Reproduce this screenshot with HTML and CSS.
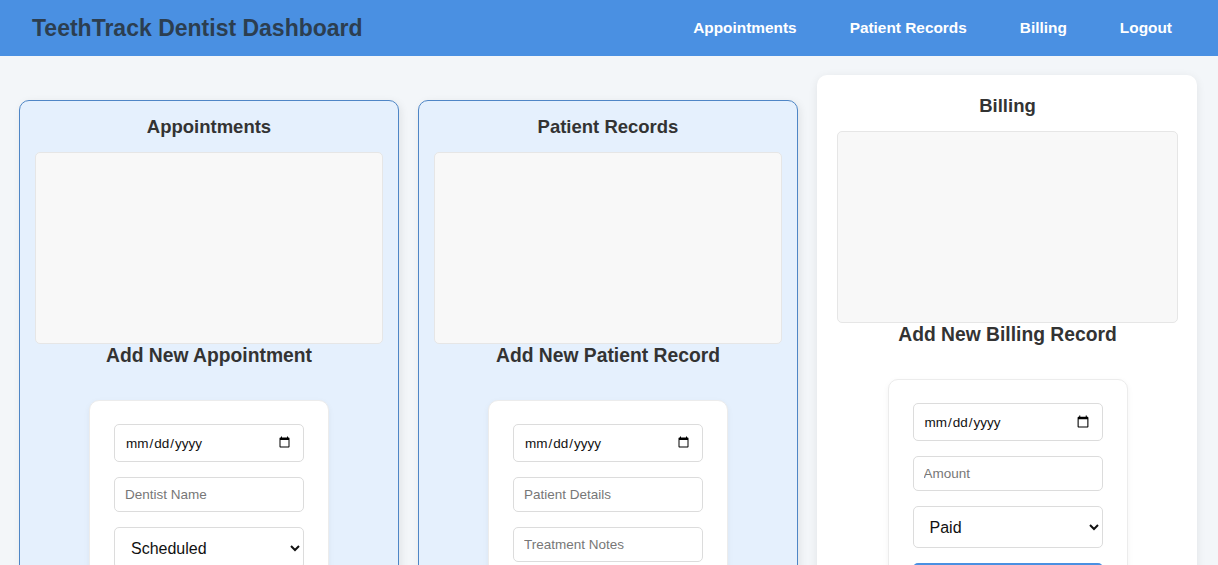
FILE: index.html
```html
<!DOCTYPE html>
<html lang="en">
<head>
<meta charset="UTF-8">
<title>TeethTrack Dentist Dashboard</title>
<link rel="stylesheet" href="styles.css">
</head>
<body>
<header class="topbar">
  <h1 class="brand">TeethTrack Dentist Dashboard</h1>
  <nav class="nav">
    <a href="#appointments" class="nav-link">Appointments</a>
    <a href="#records" class="nav-link">Patient Records</a>
    <a href="#billing" class="nav-link">Billing</a>
    <a href="#logout" class="nav-link">Logout</a>
  </nav>
</header>
<main class="dashboard">
  <section class="panel panel-active" id="appointments">
    <h3 class="panel-title">Appointments</h3>
    <div class="list-box"></div>
    <h3 class="panel-subtitle">Add New Appointment</h3>
    <form class="entry-form">
      <input type="date" class="field field-date">
      <input type="text" class="field" placeholder="Dentist Name">
      <select class="field field-select">
        <option>Scheduled</option>
        <option>Completed</option>
        <option>Cancelled</option>
      </select>
      <button type="button" class="submit">Add Appointment</button>
    </form>
  </section>
  <section class="panel panel-active" id="records">
    <h3 class="panel-title">Patient Records</h3>
    <div class="list-box"></div>
    <h3 class="panel-subtitle">Add New Patient Record</h3>
    <form class="entry-form">
      <input type="date" class="field field-date">
      <input type="text" class="field" placeholder="Patient Details">
      <input type="text" class="field" placeholder="Treatment Notes">
      <button type="button" class="submit">Add Record</button>
    </form>
  </section>
  <section class="panel panel-plain" id="billing">
    <h3 class="panel-title">Billing</h3>
    <div class="list-box"></div>
    <h3 class="panel-subtitle">Add New Billing Record</h3>
    <form class="entry-form">
      <input type="date" class="field field-date">
      <input type="text" class="field" placeholder="Amount">
      <select class="field field-select">
        <option>Paid</option>
        <option>Pending</option>
      </select>
      <button type="button" class="submit">Add Billing</button>
    </form>
  </section>
</main>
</body>
</html>
```
FILE: styles.css
```css
* { box-sizing: border-box; }

html, body {
  margin: 0;
  padding: 0;
}

body {
  font-family: "Liberation Sans", Arial, sans-serif;
  background: #f3f6f9;
  color: #333;
}

.topbar {
  height: 56px;
  background: #4a90e2;
  display: flex;
  align-items: center;
  justify-content: space-between;
  padding: 0 46px 0 32px;
}

.brand {
  margin: 0;
  font-size: 23px;
  font-weight: bold;
  color: #2c3e50;
}

.nav {
  display: flex;
  gap: 53px;
}

.nav-link {
  color: #fff;
  text-decoration: none;
  font-weight: bold;
  font-size: 15.4px;
}

.dashboard {
  display: grid;
  grid-template-columns: repeat(3, 380px);
  align-items: start;
  gap: 19px;
  padding: 19px;
}

.panel {
  border-radius: 10px;
}

.panel-active {
  margin-top: 25px;
  background: #e5f0fd;
  border: 1px solid #4f86c6;
  padding: 15px;
  box-shadow: 2px 2px 8px rgba(0, 0, 0, 0.08);
}

.panel-plain {
  background: #fff;
  padding: 20px 19px 20px 20px;
  box-shadow: 0 2px 10px rgba(0, 0, 0, 0.08);
}

.panel-title,
.panel-subtitle {
  margin: 0;
  text-align: center;
  font-weight: bold;
  color: #333;
}

.panel-title {
  font-size: 18.5px;
  line-height: 21px;
  margin-bottom: 15px;
}

.panel-subtitle {
  font-size: 19.3px;
  line-height: 23px;
  margin-bottom: 33px;
}

.list-box {
  height: 192px;
  background: #f8f8f8;
  border: 1px solid #e6e6e6;
  border-radius: 5px;
}

.entry-form {
  width: 240px;
  margin: 0 auto;
  background: #fff;
  border: 1px solid #ececec;
  border-radius: 10px;
  padding: 23px 24px 24px;
  display: flex;
  flex-direction: column;
  gap: 15px;
  box-shadow: 0 2px 6px rgba(0, 0, 0, 0.05);
}

.field {
  width: 100%;
  height: 35px;
  margin: 0;
  font-family: "Liberation Sans", Arial, sans-serif;
  font-size: 13.5px;
  padding: 0 10px;
  border: 1px solid #dcdcdc;
  border-radius: 5px;
  background: #fff;
  color: #111;
}

.field::placeholder {
  color: #777;
}

.field-date {
  height: 38px;
}

.field-select {
  height: 42px;
  font-size: 16px;
  padding: 0 12px;
}

.submit {
  width: 100%;
  padding: 10px;
  background: #4a90e2;
  color: #fff;
  border: none;
  border-radius: 5px;
  font-size: 15px;
  font-family: "Liberation Sans", Arial, sans-serif;
}
```
